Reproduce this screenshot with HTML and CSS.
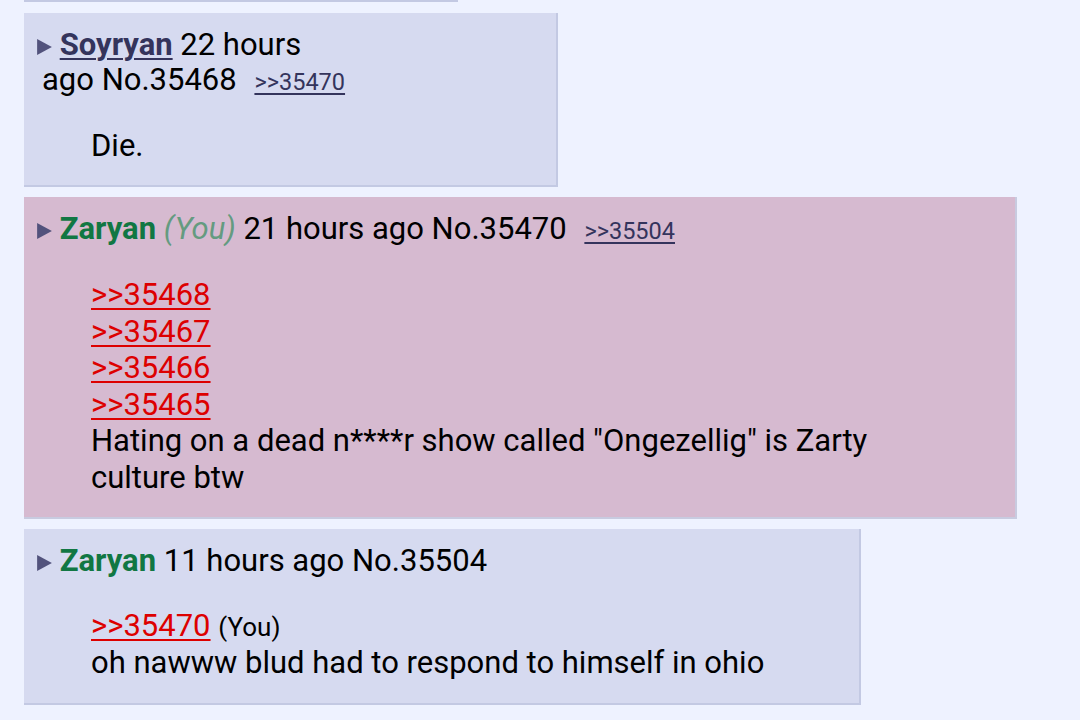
FILE: index.html
```html
<!DOCTYPE html>
<html>
<head>
<meta charset="utf-8">
<link rel="stylesheet" href="styles.css">
</head>
<body>
<div class="thread">
  <div class="post stub"></div>

  <div class="post p1">
    <div class="head"><svg class="tri" viewBox="0 0 12 13" width="15" height="16"><path d="M0 0 L12 6.5 L0 13 Z"/></svg> <a class="email">Soyryan</a> 22 hours<br><span class="wrap">ago No.35468</span> <a class="backlink">&gt;&gt;35470</a></div>
    <div class="msg">Die.</div>
  </div>

  <div class="post p2 hl">
    <div class="head"><svg class="tri" viewBox="0 0 12 13" width="15" height="16"><path d="M0 0 L12 6.5 L0 13 Z"/></svg> <span class="name">Zaryan</span> <span class="you">(You)</span> 21 hours ago No.35470 <a class="backlink">&gt;&gt;35504</a></div>
    <div class="msg"><a class="quote">&gt;&gt;35468</a><br><a class="quote">&gt;&gt;35467</a><br><a class="quote">&gt;&gt;35466</a><br><a class="quote">&gt;&gt;35465</a><br>Hating on a dead n****r show called "Ongezellig" is Zarty culture btw</div>
  </div>

  <div class="post p3">
    <div class="head"><svg class="tri" viewBox="0 0 12 13" width="15" height="16"><path d="M0 0 L12 6.5 L0 13 Z"/></svg> <span class="name">Zaryan</span> 11 hours ago No.35504</div>
    <div class="msg"><a class="quote">&gt;&gt;35470</a> <span class="ylabel">(You)</span><br>oh nawww blud had to respond to himself in ohio</div>
  </div>
</div>
</body>
</html>
```

FILE: styles.css
```css
html, body {
  margin: 0;
  padding: 0;
  background: #eef2ff;
}
body {
  font-family: Roboto, "Noto Sans", sans-serif;
  font-size: 31px;
  line-height: 36.5px;
  color: #000;
  width: 1080px;
  height: 720px;
  overflow: hidden;
}
.thread {
  display: flex;
  flex-direction: column;
  align-items: flex-start;
  gap: 10px;
  padding-left: 24px;
}
.post {
  background: #d6daf0;
  border-right: 2px solid #c3c9e3;
  border-bottom: 2px solid #c3c9e3;
  box-sizing: border-box;
  padding: 14px 0 21px 0;
}
.post.hl {
  background: #d6bad0;
  border-color: #c8cbe0;
}
.stub {
  width: 434px;
  height: 2px;
  padding: 0;
  border-right: none;
  margin-bottom: 1px;
}
.p1 { width: 534px; padding-bottom: 20px; }
.p1 .head { line-height: 35px; }
.p2 { width: 993px; }
.p2 .msg { padding-right: 130px; }
.p3 { width: 837px; }
.head {
  padding-left: 13px;
}
.wrap {
  padding-left: 5px;
}
.tri {
  fill: #52527c;
  vertical-align: 0;
  margin-right: 0;
}
.email {
  color: #34345c;
  font-weight: bold;
  text-decoration: underline;
  text-decoration-thickness: 2px;
  text-underline-offset: 3px;
}
.name {
  color: #117743;
  font-weight: bold;
}
.you {
  color: #649b80;
  font-style: italic;
}
.backlink {
  color: #34345c;
  font-size: 23.5px;
  margin-left: 10px;
  text-decoration: underline;
  text-decoration-thickness: 2px;
  text-underline-offset: 3px;
}
.msg {
  margin-top: 28px;
  padding-left: 67px;
  padding-right: 40px;
}
.quote {
  color: #dd0000;
  text-decoration: underline;
  text-decoration-thickness: 2px;
  text-underline-offset: 3px;
}
.ylabel {
  font-size: 26px;
}
```
